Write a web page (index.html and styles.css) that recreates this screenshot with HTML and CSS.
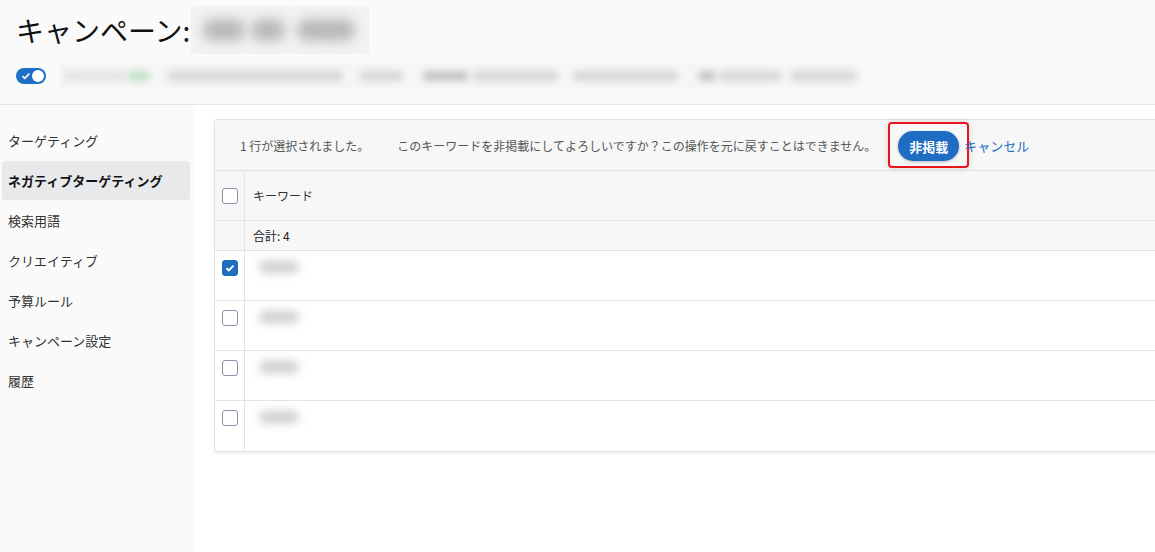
FILE: index.html
```html
<!DOCTYPE html>
<html lang="ja">
<head>
    <meta charset="UTF-8">
    <title>キャンペーン</title>
    <link rel="stylesheet" href="styles.css">
</head>
<body>
    <header class="page-header">
        <div class="title-row">
            <h1>キャンペーン:</h1>
            <div class="title-name"><span class="blob b1"></span><span class="blob b2"></span><span class="blob b3"></span></div>
        </div>
        <div class="status-row">
            <span class="toggle">
                <svg width="10" height="8" viewBox="0 0 10 8"><path d="M1.5 4.2 L3.8 6.3 L8.3 1.6" fill="none" stroke="#fff" stroke-width="1.6"/></svg>
                <span class="knob"></span>
            </span>
            <div class="status-blur">
                <span class="sb light" style="width:62px"></span>
                <span class="sb green" style="width:22px"></span>
                <span class="sb" style="width:175px;margin-left:18px"></span>
                <span class="sb" style="width:43px;margin-left:17px"></span>
                <span class="sb dark" style="width:45px;margin-left:20px"></span>
                <span class="sb" style="width:85px;margin-left:5px"></span>
                <span class="sb" style="width:105px;margin-left:15px"></span>
                <span class="sb dark" style="width:18px;margin-left:20px"></span>
                <span class="sb" style="width:62px;margin-left:3px"></span>
                <span class="sb" style="width:65px;margin-left:10px"></span>
            </div>
        </div>
    </header>

    <div class="layout">
        <nav class="sidebar">
            <a class="nav-item">ターゲティング</a>
            <a class="nav-item active">ネガティブターゲティング</a>
            <a class="nav-item">検索用語</a>
            <a class="nav-item">クリエイティブ</a>
            <a class="nav-item">予算ルール</a>
            <a class="nav-item">キャンペーン設定</a>
            <a class="nav-item">履歴</a>
        </nav>

        <main class="content">
            <div class="table-card">
                <div class="action-bar">
                    <span class="selected">1 行が選択されました。</span>
                    <span class="confirm">このキーワードを非掲載にしてよろしいですか？この操作を元に戻すことはできません。</span>
                    <span class="highlight"><button class="btn-primary">非掲載</button></span>
                    <a class="btn-link">キャンセル</a>
                </div>
                <div class="row head-row">
                    <div class="cell-check"><span class="checkbox"></span></div>
                    <div class="cell-main">キーワード</div>
                </div>
                <div class="row total-row">
                    <div class="cell-check"></div>
                    <div class="cell-main">合計: 4</div>
                </div>
                <div class="row data-row">
                    <div class="cell-check"><span class="checkbox checked"><svg width="10" height="8" viewBox="0 0 10 8"><path d="M1.4 4.2 L3.8 6.4 L8.5 1.6" fill="none" stroke="#fff" stroke-width="2"/></svg></span></div>
                    <div class="cell-main"><span class="kw"></span></div>
                </div>
                <div class="row data-row">
                    <div class="cell-check"><span class="checkbox"></span></div>
                    <div class="cell-main"><span class="kw"></span></div>
                </div>
                <div class="row data-row">
                    <div class="cell-check"><span class="checkbox"></span></div>
                    <div class="cell-main"><span class="kw"></span></div>
                </div>
                <div class="row data-row last">
                    <div class="cell-check"><span class="checkbox"></span></div>
                    <div class="cell-main"><span class="kw"></span></div>
                </div>
            </div>
        </main>
    </div>
</body>
</html>
```

FILE: styles.css
```css
* {
    box-sizing: border-box;
}

body {
    margin: 0;
    font-family: "Noto Sans CJK JP", "Noto Sans", sans-serif;
    color: #222;
    background: #fff;
    height: 552px;
    overflow: hidden;
}

.page-header {
    height: 105px;
    background: #fafafa;
    border-bottom: 1px solid #e6e6e6;
    padding: 6px 0 0 16px;
}

.title-row {
    display: flex;
    align-items: center;
    height: 48px;
}

h1 {
    margin: 0;
    font-size: 28px;
    font-weight: 400;
    color: #111;
}

.title-name {
    width: 178px;
    height: 48px;
    margin-left: 1px;
    background: #f2f2f2;
    display: flex;
    align-items: center;
    padding-left: 12px;
    gap: 6px;
    overflow: hidden;
}

.blob {
    height: 22px;
    background: #b9b9b9;
    border-radius: 10px;
    filter: blur(6px);
}

.b1 { width: 42px; }
.b2 { width: 34px; }
.b3 { width: 58px; margin-left: 6px; }

.status-row {
    display: flex;
    align-items: center;
    margin-top: 10px;
    height: 24px;
}

.toggle {
    width: 30px;
    height: 16px;
    border-radius: 8px;
    background: #1f6fc5;
    display: flex;
    align-items: center;
    justify-content: space-between;
    padding: 0 2px 0 5px;
}

.knob {
    width: 12px;
    height: 12px;
    border-radius: 50%;
    background: #fff;
}

.status-blur {
    display: flex;
    align-items: center;
    margin-left: 14px;
    height: 24px;
    padding: 0 6px 0 4px;
    background: #f6f6f6;
}

.sb {
    height: 10px;
    background: #d6d6d6;
    border-radius: 4px;
    filter: blur(3.5px);
}

.sb.light {
    background: #e2e2e2;
}

.sb.dark {
    background: #c4c4c4;
}

.sb.green {
    background: #bfe0c6;
    margin-left: 2px;
}

.layout {
    display: flex;
    height: 447px;
}

.sidebar {
    width: 195px;
    background: #fafafa;
    padding: 16px 5px 0 2px;
    display: flex;
    flex-direction: column;
}

.nav-item {
    height: 40px;
    line-height: 40px;
    padding-left: 6px;
    font-size: 13px;
    color: #333;
    border-radius: 3px;
}

.nav-item.active {
    background: #e8e9eb;
    color: #111;
    font-weight: 700;
    height: 39px;
    line-height: 39px;
    margin-bottom: 1px;
}

.content {
    flex: 1;
    padding: 14px 0 0 19px;
    overflow: hidden;
}

.table-card {
    width: 960px;
    border: 1px solid #e2e2e2;
    border-right: none;
    border-radius: 3px 0 0 3px;
    box-shadow: 0 2px 2px rgba(0, 0, 0, 0.06);
    background: #fff;
}

.action-bar {
    height: 51px;
    background: #f7f7f7;
    border-bottom: 1px solid #e2e2e2;
    display: flex;
    align-items: center;
    padding-left: 25px;
    font-size: 12px;
    color: #555;
}

.confirm {
    margin-left: 28px;
}

.highlight {
    margin-left: 12px;
    padding: 7px 8px 5px 8px;
    border: 2px solid #e8141c;
    border-radius: 4px;
    box-shadow: 0 0 6px rgba(0, 0, 0, 0.15);
    display: flex;
}

.btn-primary {
    height: 30px;
    padding: 0 11px;
    border: none;
    border-radius: 15px;
    background: #1f6dc2;
    color: #fff;
    font-family: inherit;
    font-size: 13px;
    font-weight: 700;
    box-shadow: 0 1px 3px rgba(0, 0, 0, 0.25);
}

.btn-link {
    margin-left: -5px;
    font-size: 13px;
    color: #1f6dc2;
}

.row {
    display: flex;
    border-bottom: 1px solid #e4e4e4;
}

.row.last {
    border-bottom: none;
}

.cell-check {
    width: 30px;
    border-right: 1px solid #e4e4e4;
    display: flex;
    justify-content: center;
}

.cell-main {
    flex: 1;
    padding-left: 8px;
    font-size: 12px;
    color: #333;
    display: flex;
    align-items: center;
}

.head-row {
    height: 50px;
    background: #f7f7f7;
}

.head-row .cell-check {
    align-items: center;
}

.total-row {
    height: 30px;
    background: #f7f7f7;
}

.total-row .cell-main {
    color: #222;
}

.data-row {
    height: 50px;
}

.data-row .cell-check {
    padding-top: 9px;
}

.data-row .cell-main {
    align-items: flex-start;
    padding-top: 10px;
}

.checkbox {
    width: 16px;
    height: 16px;
    border: 1px solid #8a94a6;
    border-radius: 3px;
    background: #fff;
    display: flex;
    align-items: center;
    justify-content: center;
}

.checkbox.checked {
    background: #1f6dc2;
    border-color: #1f6dc2;
}

.kw {
    width: 40px;
    height: 12px;
    margin-left: 6px;
    background: #cdcdcd;
    border-radius: 6px;
    filter: blur(5px);
}
```
